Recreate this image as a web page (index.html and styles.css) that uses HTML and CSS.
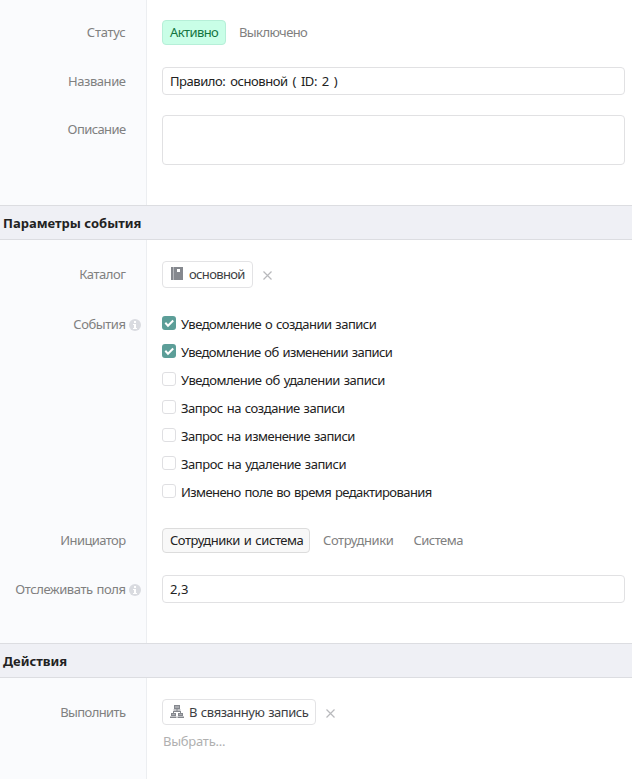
FILE: index.html
```
<!DOCTYPE html>
<html lang="ru">
<head>
<meta charset="utf-8">
<title>Правило</title>
<link rel="stylesheet" href="styles.css">
</head>
<body>
<main class="form">
  <section class="section section-main">
    <div class="row row-status">
      <div class="label label-status">Статус</div>
      <div class="field options"><span class="option option-active">Активно</span><span class="option option-off">Выключено</span></div>
    </div>
    <div class="row row-name">
      <div class="label label-input">Название</div>
      <div class="field"><div class="input input-name">Правило: основной ( ID: 2 )</div></div>
    </div>
    <div class="row">
      <div class="label label-input label-tight">Описание</div>
      <div class="field"><div class="input textarea"></div></div>
    </div>
  </section>
  <h2 class="heading">Параметры события</h2>
  <section class="section section-event">
    <div class="row row-catalog">
      <div class="label label-chip">Каталог</div>
      <div class="field options">
        <span class="chip chip-catalog"><svg class="icon" width="14" height="14" viewBox="0 0 14 14"><path fill="#85888e" d="M1 0h2v13H1zM4 0h9v13H4z"/><path fill="#b5b7bb" d="M3 0h1v13H3z"/><path fill="#fff" d="M7 2h3v3H7z"/></svg>основной</span>
        <svg class="remove" width="9" height="9" viewBox="0 0 9 9"><path d="M.5.5l8 8M8.500.5l-8 8"/></svg>
      </div>
    </div>
    <div class="row row-events">
      <div class="label label-events">События<svg class="info" width="12" height="12" viewBox="0 0 12 12"><circle cx="6" cy="6" r="6" fill="#d9dbe0"/><path fill="#fff" d="M5 2h2v2H5zM4 5h3v4h1v1H4V9h1V6H4z"/></svg></div>
      <div class="field checks">
        <div class="check"><span class="box checked"><svg width="14" height="14" viewBox="0 0 14 14"><path d="M3.300 6.800L6 9.700l5.200-5.200"/></svg></span><span class="t1">Уведомление о создании записи</span></div>
        <div class="check"><span class="box checked"><svg width="14" height="14" viewBox="0 0 14 14"><path d="M3.300 6.800L6 9.700l5.200-5.200"/></svg></span><span class="t2">Уведомление об изменении записи</span></div>
        <div class="check"><span class="box"></span><span class="t3">Уведомление об удалении записи</span></div>
        <div class="check"><span class="box"></span><span class="t4">Запрос на создание записи</span></div>
        <div class="check"><span class="box"></span><span class="t5">Запрос на изменение записи</span></div>
        <div class="check"><span class="box"></span><span class="t6">Запрос на удаление записи</span></div>
        <div class="check"><span class="box"></span><span class="t7">Изменено поле во время редактирования</span></div>
      </div>
    </div>
    <div class="row row-initiator">
      <div class="label label-tight">Инициатор</div>
      <div class="field options"><span class="option option-selected">Сотрудники и система</span><span class="option option-staff">Сотрудники</span><span class="option option-last">Система</span></div>
    </div>
    <div class="row">
      <div class="label label-input">Отслеживать поля<svg class="info" width="12" height="12" viewBox="0 0 12 12"><circle cx="6" cy="6" r="6" fill="#d9dbe0"/><path fill="#fff" d="M5 2h2v2H5zM4 5h3v4h1v1H4V9h1V6H4z"/></svg></div>
      <div class="field"><div class="input">2,3</div></div>
    </div>
  </section>
  <h2 class="heading">Действия</h2>
  <section class="section section-actions">
    <div class="row">
      <div class="label label-chip label-tight">Выполнить</div>
      <div class="field">
        <div class="options">
          <span class="chip chip-action"><svg class="icon" width="14" height="14" viewBox="0 0 14 14"><path fill="#85888e" d="M4 0h6v4H4zM1 8h5v3H1zM8 8h5v3H8zM0 11.500h6.500V13H0zM7.500 11.500H14V13H7.500zM3.500 4.500h7v1h-7zM6.500 4h1v3h-1zM3 6h8v1H3zM3 6h1v2H3zM10 6h1v2h-1z"/><path fill="#a9abb0" d="M5 1h4v2H5zM2 9h3v1H2zM9 9h3v1H9z"/></svg>В связанную запись</span>
          <svg class="remove" width="9" height="9" viewBox="0 0 9 9"><path d="M.5.5l8 8M8.500.5l-8 8"/></svg>
        </div>
        <div class="choose">Выбрать...</div>
      </div>
    </div>
  </section>
</main>
</body>
</html>
```
FILE: styles.css
```
* { box-sizing: border-box; }
body {
  margin: 0;
  background: #fff;
  color: #222;
  font: 13px/18px "Noto Sans", "Open Sans", sans-serif;
  white-space: nowrap;
}
.form { height: 779px; overflow: hidden; }
.section { background: linear-gradient(to right, #fafbfd 146px, #eceef1 146px, #eceef1 147px, #fff 147px); }
.section-main { height: 205px; padding-top: 20px; }
.section-event { height: 403px; padding-top: 21px; }
.section-actions { height: 101px; padding-top: 21px; }
.heading {
  height: 35px;
  margin: 0;
  padding-left: 3px;
  border: solid #dcdde1;
  border-width: 1px 0;
  background: #eff0f5;
  font-size: 13px;
  line-height: 35px;
}
.row { display: grid; grid-template-columns: 147px 1fr; }
.row-status { height: 47px; }
.row-name { height: 48px; }
.row-catalog { height: 55px; }
.row-events { height: 212px; }
.row-initiator { height: 47px; }
.label {
  position: relative;
  padding: 3px 21.500px 0 0;
  color: #808080;
  letter-spacing: -.45px;
  word-spacing: 1px;
  text-align: right;
}
.label-status { letter-spacing: -.25px; }
.label-tight { letter-spacing: -.6px; }
.label-input { padding-top: 5px; }
.label-chip { padding-top: 4px; }
.label-events { padding-top: 0; margin-top: -1px; }
.info { position: absolute; right: 6px; margin-top: 4px; }
.field { padding: 0 7px 0 15px; }
.options { display: flex; align-items: flex-start; }
.option { height: 25px; padding: 3px 0 0 13px; color: #808080; }
.option-active, .option-selected { padding: 2px 7px; border: 1px solid #b6efd8; border-radius: 4px; }
.option-active { width: 64px; background: #c9fee7; color: #12753f; letter-spacing: -.6px; }
.option-off { letter-spacing: -.6px; }
.option-selected {
  width: 148px;
  border-color: #dcdcdc;
  background: #f8f8f8;
  color: #222;
  letter-spacing: -.45px;
  word-spacing: 1px;
}
.option-staff { letter-spacing: -.4px; }
.option-last { padding-left: 20px; letter-spacing: -.5px; }
.input { height: 28px; padding: 4px 7px; border: 1px solid #e1e1e3; border-radius: 4px; background: #fff; }
.input-name { letter-spacing: -.45px; word-spacing: 2px; }
.textarea { height: 50px; }
.chip { display: flex; padding: 3px 7px 0; border: 1px solid #e3e3e5; border-radius: 4px; background: #fff; color: #3d3f44; }
.chip-catalog { width: 91px; height: 27px; letter-spacing: -.65px; }
.chip-action { width: 154px; height: 26px; letter-spacing: -.48px; word-spacing: 1px; }
.icon { flex: none; margin: 2px 5px 0 0; }
.remove { margin: 10px 0 0 10px; fill: none; stroke: #b8b9bc; stroke-width: 1.2; }
.checks { display: flex; flex-direction: column; }
.check { display: flex; height: 28px; word-spacing: 1px; }
.check > :last-child { margin-top: -1px; }
.t1 { letter-spacing: -.52px; }
.t2 { letter-spacing: -.58px; }
.t3 { letter-spacing: -.49px; }
.t4 { letter-spacing: -.48px; }
.t5 { letter-spacing: -.5px; }
.t6 { letter-spacing: -.44px; }
.t7 { letter-spacing: -.57px; }
.box { width: 14px; height: 14px; margin-right: 5px; border: 1px solid #dfdfe2; border-radius: 3px; background: #fff; }
.checked { border: 0; background: #5c9e98; }
.checked svg { display: block; fill: none; stroke: #fff; stroke-width: 2; }
.choose { margin: 7px 0 0 1px; color: #b0b0b0; letter-spacing: -.25px; }
```
